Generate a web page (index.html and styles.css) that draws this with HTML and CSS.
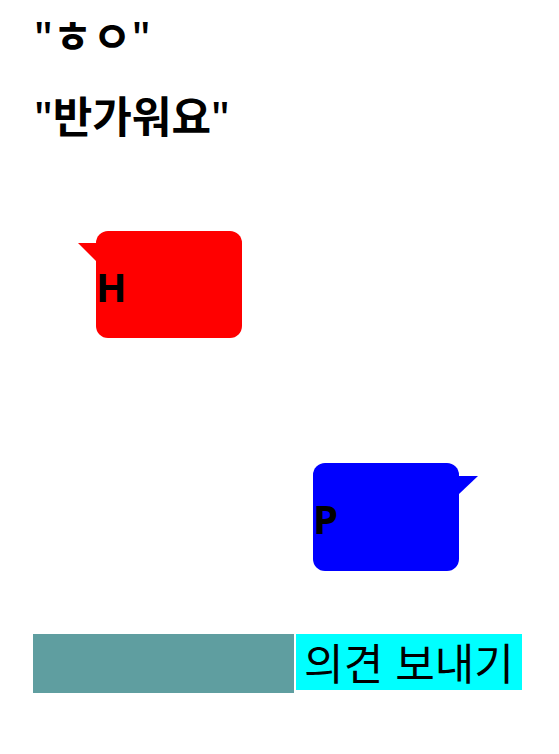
FILE: index.html
```
<!DOCTYPE html>
<html lang="ko">
<head>
<meta charset="utf-8">
<title>의견 보내기</title>
<link rel="stylesheet" href="styles.css">
</head>
<body>
<main class="chat">
  <h1 class="line">"ㅎㅇ"</h1>
  <h1 class="line">"반가워요"</h1>
  <section class="messages">
    <div class="bubble bubble-left"><span>H</span></div>
    <div class="bubble bubble-right"><span>P</span></div>
  </section>
  <form class="composer">
    <input class="field" type="text" aria-label="의견">
    <button class="send" type="button">의견 보내기</button>
  </form>
</main>
</body>
</html>
```

FILE: styles.css
```
* {
  box-sizing: border-box;
}

body {
  margin: 0;
  background: #fff;
  color: #000;
  font-family: "Noto Sans CJK KR", sans-serif;
  font-size: 43px;
}

.chat {
  padding: 7px 37px 0 33px;
}

.line {
  margin: 0 0 20px;
  padding-left: 1px;
  font-family: "Open Sans", "Noto Sans CJK KR", sans-serif;
  font-size: 43px;
  line-height: 60px;
  font-weight: 600;
}

.messages {
  display: flex;
  flex-direction: column;
  gap: 125px;
  padding: 64px 63px 63px;
}

.bubble {
  position: relative;
  display: flex;
  align-items: center;
  width: 146px;
  height: 107px;
  padding-top: 4px;
  border-radius: 12px;
  font: 700 40px/56px "Open Sans", sans-serif;
}

.bubble::before {
  content: "";
  position: absolute;
  top: 12px;
  border-top: 18px solid;
}

.bubble-left {
  background: #f00;
}

.bubble-left::before {
  right: 100%;
  border-top-color: #f00;
  border-left: 18px solid transparent;
}

.bubble-right {
  align-self: flex-end;
  height: 108px;
  background: #00f;
}

.bubble-right::before {
  top: 13px;
  left: 100%;
  border-top-color: #00f;
  border-right: 19px solid transparent;
}

.composer {
  display: flex;
  align-items: flex-start;
  gap: 2px;
}

.field {
  flex: 1;
  min-width: 0;
  height: 59px;
  border: 0;
  border-radius: 0;
  padding: 0 8px;
  background: #5f9ea0;
  font: inherit;
}

.send {
  width: 226px;
  height: 56px;
  border: 0;
  padding: 0 0 2px;
  background: #0ff;
  color: #000;
  font: 43px/54px "Noto Sans CJK KR", sans-serif;
  white-space: nowrap;
}
```
